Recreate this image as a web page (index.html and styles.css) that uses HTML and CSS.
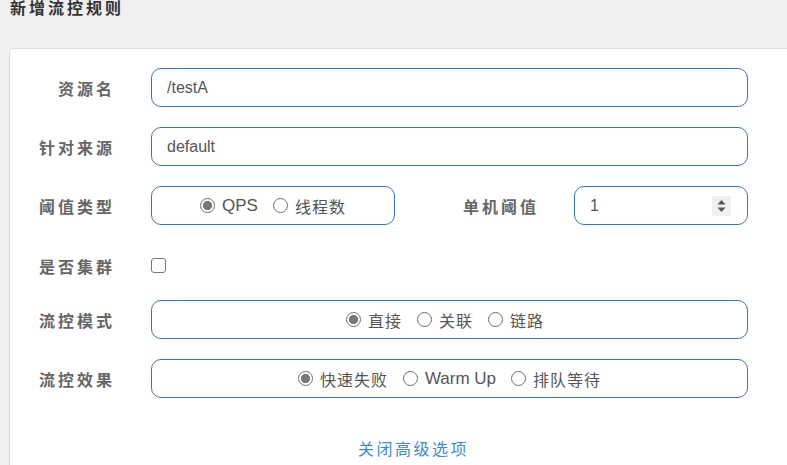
FILE: index.html
```html
<!DOCTYPE html>
<html lang="zh">
<head>
<meta charset="utf-8">
<title>新增流控规则</title>
<link rel="stylesheet" href="styles.css">
</head>
<body>
<h1 class="title">新增流控规则</h1>
<div class="card">
  <div class="row">
    <div class="label">资源名</div>
    <div class="input wide">/testA</div>
  </div>
  <div class="row">
    <div class="label">针对来源</div>
    <div class="input wide">default</div>
  </div>
  <div class="row">
    <div class="label">阈值类型</div>
    <div class="input radio-box small">
      <span class="opt"><span class="radio on"></span><span class="en">QPS</span></span>
      <span class="opt"><span class="radio"></span><span class="cn">线程数</span></span>
    </div>
    <div class="label label2">单机阈值</div>
    <div class="input num">
      <span>1</span>
      <span class="spin">
        <svg width="19" height="20" viewBox="0 0 19 20"><path d="M5.5 8.5 L9.5 4 L13.5 8.5 Z" fill="#555"/><path d="M5.5 11.5 L9.5 16 L13.5 11.5 Z" fill="#555"/></svg>
      </span>
    </div>
  </div>
  <div class="row cb">
    <div class="label">是否集群</div>
    <span class="checkbox"></span>
  </div>
  <div class="row">
    <div class="label">流控模式</div>
    <div class="input radio-box wide shift">
      <span class="opt"><span class="radio on"></span><span class="cn">直接</span></span>
      <span class="opt"><span class="radio"></span><span class="cn">关联</span></span>
      <span class="opt"><span class="radio"></span><span class="cn">链路</span></span>
    </div>
  </div>
  <div class="row">
    <div class="label">流控效果</div>
    <div class="input radio-box wide">
      <span class="opt"><span class="radio on"></span><span class="cn">快速失败</span></span>
      <span class="opt"><span class="radio"></span><span class="en">Warm Up</span></span>
      <span class="opt"><span class="radio"></span><span class="cn">排队等待</span></span>
    </div>
  </div>
  <div class="more">关闭高级选项</div>
</div>
</body>
</html>
```
FILE: styles.css
```css
html, body {
  margin: 0;
  padding: 0;
}
body {
  background: #f0f0f0;
  overflow: hidden;
  width: 787px;
  height: 465px;
  font-family: "Liberation Sans", Arial, "Noto Sans CJK SC", sans-serif;
}
.title {
  margin: 0;
  padding: 0 0 0 10px;
  height: 18px;
  line-height: 18px;
  font-size: 16px;
  font-weight: bold;
  color: #333;
  letter-spacing: 3px;
}
.card {
  margin: 30px 0 0 9px;
  width: 809px;
  height: 417px;
  box-sizing: border-box;
  background: #fff;
  border: 1px solid #ddd;
  border-bottom: 0;
  border-radius: 4px 4px 0 0;
  padding-top: 19px;
  overflow: hidden;
}
.row {
  display: flex;
  align-items: center;
  height: 39px;
  margin-bottom: 20px;
}
.row.cb {
  height: 41px;
  margin-bottom: 14px;
}
.label {
  width: 105px;
  flex: none;
  text-align: right;
  font-size: 16px;
  font-weight: bold;
  color: #666;
  letter-spacing: 3px;
  margin-right: 36px;
}
.label2 {
  width: 144px;
  margin-right: 35px;
}
.input {
  box-sizing: border-box;
  height: 39px;
  border: 1px solid #3a77b5;
  border-radius: 10px;
  padding: 0 15px;
  font-size: 16px;
  color: #555;
  display: flex;
  align-items: center;
  flex: none;
}
.wide { width: 597px; }
.small { width: 244px; }
.num {
  width: 174px;
  padding-right: 16px;
}
.spin {
  margin-left: auto;
  width: 19px;
  height: 20px;
  background: #f0f0f0;
  display: block;
}
.spin svg { display: block; }
.radio-box {
  justify-content: center;
  padding: 0;
}
.radio-box.shift {
  padding-right: 9px;
}
.opt {
  display: inline-flex;
  align-items: center;
}
.opt + .opt { margin-left: 15px; }
.radio {
  box-sizing: border-box;
  width: 15px;
  height: 15px;
  border: 1px solid #6e6e6e;
  border-radius: 50%;
  margin-right: 7px;
  background: #fff;
}
.radio.on {
  background: radial-gradient(circle, #777 0 4.3px, #fff 4.9px);
}
.cn {
  font-size: 16px;
  letter-spacing: 1px;
  color: #555;
}
.en {
  font-size: 17px;
  color: #555;
}
.checkbox {
  box-sizing: border-box;
  width: 15px;
  height: 15px;
  border: 1px solid #767676;
  border-radius: 3px;
  background: #fff;
}
.more {
  margin-top: 42px;
  text-align: center;
  line-height: 20px;
  font-size: 16px;
  letter-spacing: 2.5px;
  color: #428bca;
}
```
